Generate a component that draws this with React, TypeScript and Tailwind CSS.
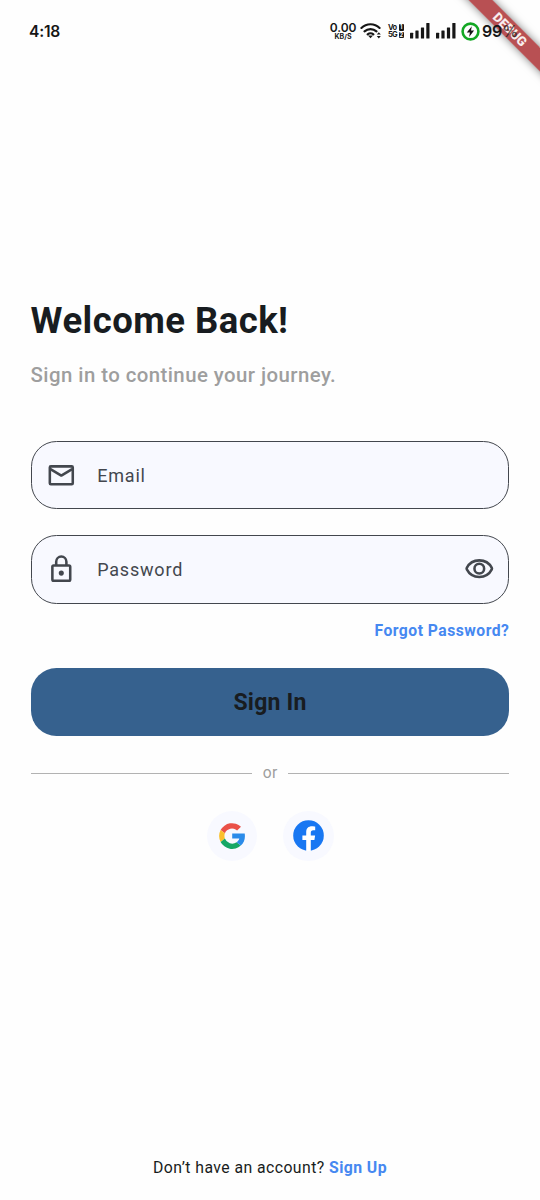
import React from "react";

const Signal = () => (
  <svg className="h-4 w-5 shrink-0" viewBox="0 0 20 16" fill="#161616">
    <rect x="0" y="9.8" width="3.2" height="5.8" rx=".5" />
    <rect x="5.4" y="7.6" width="3.2" height="8" rx=".5" />
    <rect x="10.9" y="4.4" width="3.2" height="11.2" rx=".5" />
    <rect x="16.3" y="0" width="3.2" height="15.6" rx=".5" />
  </svg>
);

function StatusBar() {
  return (
    <header className="relative z-10 flex h-[62px] items-center pl-[29px] pr-[22px] text-[#161616] font-['Inter',sans-serif]">
      <span className="pt-px text-[15.6px] leading-5 font-semibold tracking-[-0.2px]">4:18</span>
      <div className="ml-auto flex items-center">
        <div className="flex w-[27px] flex-col items-center pr-px font-semibold">
          <span className="text-[12px] leading-[9px] tracking-[-0.1px]">0.00</span>
          <span className="pt-px text-[7px] leading-[7px] font-bold">KB/S</span>
        </div>
        <svg className="ml-[3px] h-[18px] w-[22px] shrink-0" viewBox="0 0 22 18" fill="none" stroke="#161616" strokeWidth="2.1" strokeLinecap="round">
          <path d="M1.4 6C6.5.9 14.5.9 19.6 6M4.5 9.4c3.4-3.1 8.6-3.1 12 0M7.6 12.4c1.8-1.4 4-1.4 5.8 0" />
          <path d="M8 13.4h5l-2.5 2.8z" fill="#161616" stroke="none" />
          <path d="M16.8 12.6l2-2.4 2 2.4zM16.8 14h4l-2 2.4z" fill="#161616" stroke="none" />
        </svg>
        <div className="ml-[6px] flex w-4 items-center justify-between text-[7.5px] leading-[7.5px] font-bold">
          <div className="flex w-[9px] flex-col tracking-[-0.8px]"><span>Vo</span><span>5G</span></div>
          <div className="flex w-[5.5px] flex-col gap-px text-center text-[5.5px] leading-[6.5px] text-white"><span className="rounded-[1px] bg-[#161616]">1</span><span className="rounded-[1px] bg-[#161616]">2</span></div>
        </div>
        <span className="ml-[6px] flex"><Signal /></span>
        <span className="ml-[5.5px] flex"><Signal /></span>
        <svg className="ml-[5.5px] h-[19px] w-[19px] shrink-0" viewBox="0 0 19 19">
          <circle cx="9.5" cy="9.5" r="7.9" fill="none" stroke="#13a724" strokeWidth="2.6" />
          <path d="M10.8 4.2L5.8 10.4h3.1l-.8 4.5 5-6.3H10z" fill="#161616" />
        </svg>
        <span className="ml-[2px] text-[16px] leading-5 font-semibold tracking-[-0.2px]">99<span className="text-[#161616]/70">%</span></span>
      </div>
    </header>
  );
}

const Mail = () => (
  <svg className="size-[30.6px]" viewBox="0 0 24 24" fill="none" stroke="#43474e" strokeWidth="2" strokeLinejoin="round">
    <rect x="3" y="5" width="18" height="14" rx=".8" />
    <path d="M3.5 7.1L12 12.2l8.5-5.1" />
  </svg>
);

const Lock = () => (
  <svg className="size-[30.6px]" viewBox="0 0 24 24" fill="none" stroke="#43474e" strokeWidth="2">
    <rect x="5" y="9" width="14" height="12" rx="1" />
    <path d="M8 9V6a4 4 0 0 1 8 0v3" />
    <circle cx="12" cy="15" r="2" fill="#43474e" stroke="none" />
  </svg>
);

const Eye = () => (
  <svg className="size-[30.6px]" viewBox="0 0 24 24" fill="none" stroke="#43474e" strokeWidth="2" strokeLinejoin="round">
    <path d="M12 5C7.7 5 4 7.4 2.2 10.9a1.3 1.3 0 0 0 0 1.2C4 15.6 7.7 18 12 18s8-2.4 9.8-5.9a1.3 1.3 0 0 0 0-1.2C20 7.4 16.3 5 12 5Z" />
    <circle cx="12" cy="11.5" r="3.8" />
  </svg>
);

const Google = () => (
  <svg className="size-[26px]" viewBox="0 0 26 26">
    <path d="M1.6 7.1A13 13 0 0 1 22 3.7l-3.9 3.7A7.7 7.7 0 0 0 5.9 10.3z" fill="#ea5148" />
    <path d="M1.6 7.1a13 13 0 0 0 0 11.8l4.3-3.3a8 8 0 0 1 0-5.3z" fill="#fbc02d" />
    <path d="M1.6 18.9A13 13 0 0 0 21.8 22.6l-4.2-3.3A7.7 7.7 0 0 1 5.9 15.6z" fill="#16a765" />
    <path d="M13.2 10.6h12.5c.8 4.8-.6 9.2-3.9 12l-4.2-3.3c1.4-.9 2.3-2.1 2.7-3.7h-7.1z" fill="#2b8be9" />
  </svg>
);

const Facebook = () => (
  <svg className="size-[31px]" viewBox="0 0 31 31">
    <circle cx="15.5" cy="15.5" r="15.3" fill="#1877f2" />
    <path d="M13.2 31V20H9.4v-4.5h3.8v-3.4c0-3.8 2.3-5.9 5.7-5.9 1.6 0 3.3.3 3.3.3v3.8h-1.9c-1.9 0-2.5 1.2-2.5 2.4v2.8h4.3L21.4 20h-3.6v11z" fill="#fff" />
  </svg>
);

export default function App() {
  return (
    <div className="relative flex h-[1200px] w-[540px] flex-col overflow-hidden bg-[#fefefe] font-['Roboto',sans-serif]">
      <StatusBar />
      <main className="flex flex-col px-[30.6px] pt-[236px]">
        <h1 className="text-[36.5px] leading-[46px] font-bold tracking-[0.45px] whitespace-nowrap text-[#181c20]">Welcome Back!</h1>
        <p className="mt-[17px] text-[20.4px] leading-7 font-medium tracking-[0.43px] whitespace-nowrap text-[#9e9e9e]">Sign in to continue your journey.</p>
        <div className="mt-[51.5px] flex h-[68.5px] items-center rounded-[25.5px] border-[1.3px] border-[#43474e] bg-[#f8f9ff] pl-[14px] text-[18px] tracking-[0.8px] text-[#43474e]">
          <span className="pt-[1.5px]"><Mail /></span>
          <span className="ml-[21px] pt-px">Email</span>
        </div>
        <div className="mt-[26px] flex h-[68.5px] items-center rounded-[25.5px] border-[1.3px] border-[#43474e] bg-[#f8f9ff] pr-[14px] pl-[14px] text-[18px] tracking-[0.8px] text-[#43474e]">
          <Lock />
          <span className="ml-[21px]">Password</span>
          <span className="ml-auto"><Eye /></span>
        </div>
        <a className="mt-[17px] self-end text-[15.7px] leading-5 font-bold tracking-[0.49px] text-[#4688f1]">Forgot Password?</a>
        <button className="mt-[27px] h-[68.5px] rounded-[25.5px] bg-[#36618e] pt-[2px] text-[23px] font-bold tracking-[0.2px] text-[#181c20]">Sign In</button>
        <div className="mt-[27px] flex h-5 items-center text-[15.6px] tracking-[0.5px] text-[#9e9e9e]">
          <span className="h-px flex-1 bg-[#b2b2b2]" />
          <span className="pt-[2px] pr-[10px] pl-[10.5px]">or</span>
          <span className="h-px flex-1 bg-[#b2b2b2]" />
        </div>
        <div className="mt-[27.5px] flex justify-center gap-[26px]">
          <div className="flex size-[50.5px] items-center justify-center rounded-full bg-[#f8f9ff]"><Google /></div>
          <div className="flex size-[50.5px] items-center justify-center rounded-full bg-[#f8f9ff]"><Facebook /></div>
        </div>
      </main>
      <footer className="mt-auto mb-[22px] text-center text-[15.8px] leading-5 tracking-[0.43px] text-[#181c20]">
        Don’t have an account? <b className="text-[#4688f1]">Sign Up</b>
      </footer>
      <div className="absolute top-[21px] left-[430px] flex h-[17px] w-[160px] rotate-45 items-center justify-center bg-[#a01519]/75 text-[13px] font-black text-white/90 shadow-[0_0_8px_rgba(0,0,0,0.5)]">DEBUG</div>
    </div>
  );
}
